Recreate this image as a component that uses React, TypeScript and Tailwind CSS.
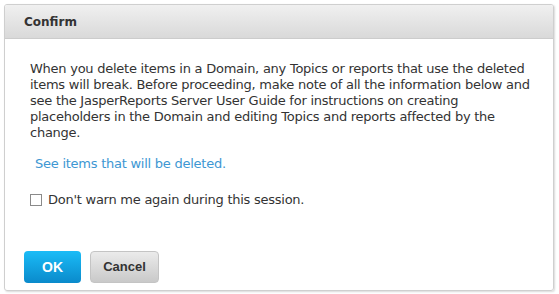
import React from "react";

export default function App() {
  return (
    <div className="w-[559px] h-[294px] bg-white p-[4px] pr-[5px] pb-[3px]" style={{ fontFamily: "'DejaVu Sans', Verdana, sans-serif" }}>
      <div className="flex flex-col h-full border border-[#cfcfcf] rounded-[3px] shadow-[1px_1px_2px_rgba(0,0,0,0.15)] overflow-hidden">
        <div className="h-[34px] shrink-0 bg-gradient-to-b from-[#f0f0f0] to-[#d9d9d9] border-b border-[#cccccc] flex items-center pl-[19px]">
          <span className="text-[12px] font-bold text-[#333333]">Confirm</span>
        </div>
        <div className="flex-1 flex flex-col pl-[25px] pr-[18px] pt-[22px]">
          <p className="text-[13px] leading-[16px] text-[#333333] tracking-[-0.25px]">
            When you delete items in a Domain, any Topics or reports that use the deleted items will break. Before proceeding, make note of all the information below and see the JasperReports Server User Guide for instructions on creating placeholders in the Domain and editing Topics and reports affected by the change.
          </p>
          <a className="mt-[15px] ml-[5px] text-[13px] leading-[16px] text-[#3d97d3] tracking-[-0.25px]">See items that will be deleted.</a>
          <label className="mt-[20px] flex items-center gap-[6px] text-[13px] leading-[16px] text-[#333333] tracking-[-0.25px]">
            <span className="w-[12px] h-[12px] border border-[#8a8a8a] bg-white inline-block" />
            Don't warn me again during this session.
          </label>
          <div className="mt-auto mb-[7px] -ml-[6px] flex gap-[9px]">
            <button className="w-[57px] h-[32px] rounded-[4px] bg-gradient-to-b from-[#1bbcf7] to-[#0a8acb] text-white font-bold" style={{ fontFamily: "'Liberation Sans', Arial, sans-serif", fontSize: "14px" }}>OK</button>
            <button className="w-[69px] h-[32px] rounded-[4px] bg-gradient-to-b from-[#ebebeb] to-[#c9c9c9] border border-[#c4c4c4] text-[#333333] font-bold" style={{ fontFamily: "'Liberation Sans', Arial, sans-serif", fontSize: "13px" }}>Cancel</button>
          </div>
        </div>
      </div>
    </div>
  );
}
